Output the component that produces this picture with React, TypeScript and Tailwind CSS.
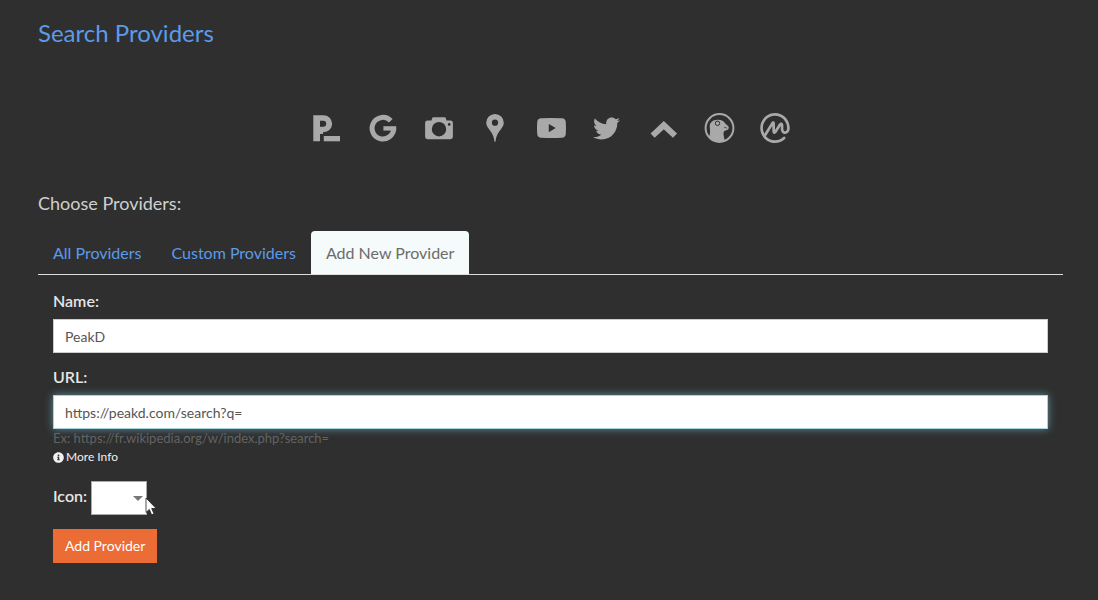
import { FaInfoCircle, FaTwitter } from "react-icons/fa";
import { SiCoinmarketcap } from "react-icons/si";

const ICON = "h-8 w-8";

function Presearch() {
  return (
    <svg viewBox="0 0 32 32" className={ICON} fill="currentColor">
      <path fillRule="evenodd" d="M2.3 3.3H12.5A8.6 8.4 0 0 1 12.5 20.2H12V22H9V29.3H2.3ZM9 8.8V14.8H12.2A3 3 0 0 0 12.2 8.8Z" />
      <path d="M12.8 24H29V29.3H12.8Z" />
    </svg>
  );
}

function Google() {
  return (
    <svg viewBox="0 0 32 32" className={ICON} fill="none" stroke="currentColor" strokeWidth="5">
      <path d="M23.8 8.8A10.8 10.8 0 1 0 26.7 16.4" />
      <path d="M16.4 16.4H29.2" strokeWidth="4.4" />
    </svg>
  );
}

function Camera() {
  return (
    <svg viewBox="0 0 32 32" className={ICON} fill="currentColor">
      <path
        fillRule="evenodd"
        d="M10.5 5.3H21.5Q22.6 5.3 22.9 6.3L23.5 8.6H27.5A2.4 2.4 0 0 1 29.9 11V24.8A2.4 2.4 0 0 1 27.5 27.2H4.5A2.4 2.4 0 0 1 2.1 24.8V11A2.4 2.4 0 0 1 4.5 8.6H8.5L9.1 6.3Q9.4 5.3 10.5 5.3ZM16 10A7.2 7.2 0 1 0 16 24.4A7.2 7.2 0 1 0 16 10ZM26.2 11A1.4 1.4 0 1 0 26.2 13.8A1.4 1.4 0 1 0 26.2 11Z"
      />
    </svg>
  );
}

function Pin() {
  return (
    <svg viewBox="0 0 32 32" className={ICON} fill="currentColor">
      <path fillRule="evenodd" d="M16 2A8.8 8.8 0 0 0 7.2 10.8C7.2 16.6 14.6 19.5 15.4 29.2Q16 30.2 16.6 29.2C17.4 19.5 24.8 16.6 24.8 10.8A8.8 8.8 0 0 0 16 2ZM16 7.6A3.1 3.1 0 1 1 16 13.8A3.1 3.1 0 1 1 16 7.6Z" />
    </svg>
  );
}

function Youtube() {
  return (
    <svg viewBox="0 0 32 32" className={ICON} fill="currentColor">
      <path fillRule="evenodd" d="M6.3 6.2Q16.5 5.7 26.7 6.2Q30.5 6.4 30.8 10Q31.2 16 30.8 22Q30.5 25.6 26.7 25.8Q16.5 26.3 6.3 25.8Q2.5 25.6 2.2 22Q1.8 16 2.2 10Q2.5 6.4 6.3 6.2ZM13.8 11.9V20.3L20.7 16.1Z" />
    </svg>
  );
}

function Chevron() {
  return (
    <svg viewBox="0 0 32 32" className={ICON} fill="none" stroke="currentColor" strokeWidth="6">
      <path d="M5.6 23.6L16.8 13.2L28 23.6" />
    </svg>
  );
}

function Duck() {
  return (
    <svg viewBox="0 0 32 32" className={ICON}>
      <circle cx="16.5" cy="16" r="13.9" fill="none" stroke="currentColor" strokeWidth="2" />
      <path
        fill="currentColor"
        d="M6 24.8C7.7 21.5 7 18 6.7 14.5C6.5 10.5 10 7.7 14.5 7.7C18 7.5 21 8.8 22 11.3L25.3 14.3Q26.5 15.8 25.1 17.4L21 19.3C19.8 21.5 21 24.7 21.7 28.7C16.5 31.3 10 30.2 6 24.8Z"
      />
      <circle cx="14.5" cy="11.3" r="2.2" fill="none" stroke="#2f2f2f" strokeWidth="1" />
      <path d="M21 15.2L24 16.1" stroke="#2f2f2f" strokeWidth="0.7" />
    </svg>
  );
}

const PROVIDERS = [
  { name: "Presearch", icon: <Presearch /> },
  { name: "Google", icon: <Google /> },
  { name: "Images", icon: <Camera /> },
  { name: "Maps", icon: <Pin /> },
  { name: "YouTube", icon: <Youtube /> },
  { name: "Twitter", icon: <FaTwitter size={27} /> },
  { name: "Steemit", icon: <Chevron /> },
  { name: "DuckDuckGo", icon: <Duck /> },
  { name: "CoinMarketCap", icon: <SiCoinmarketcap size={30} /> },
];

const LABEL = "text-base font-semibold leading-6 text-[#e6e6e6]";
const INPUT = "block h-[34px] w-full border bg-white px-[11px] text-sm text-[#555] outline-none";
const TAB = "px-[15px] py-2.5 leading-[23px]";

export default function App() {
  return (
    <main className="min-h-screen bg-[#2f2f2f] pt-[15px] pr-[35px] pb-9 pl-[38px] font-['Lato',sans-serif] text-[#d0d0d0]">
      <h1 className="text-2xl leading-9 text-[#5b9bea]">Search Providers</h1>

      <ul className="mt-[61px] flex justify-center gap-6 text-[#a9a9a9]">
        {PROVIDERS.map((p) => (
          <li key={p.name}>
            <a href="#" aria-label={p.name} className="flex h-8 w-8 items-center justify-center">
              {p.icon}
            </a>
          </li>
        ))}
      </ul>

      <h2 className="mt-[47px] text-lg leading-6">Choose Providers:</h2>

      <nav className="mt-4 flex border-b border-[#dcdcdc] text-base">
        <a href="#all" className={`${TAB} text-[#5b9bea]`}>All Providers</a>
        <a href="#custom" className={`${TAB} text-[#5b9bea]`}>Custom Providers</a>
        <a href="#add" aria-current="page" className={`${TAB} rounded-t bg-[#f5fafa] text-[#6c6c6c]`}>Add New Provider</a>
      </nav>

      <form className="px-[15px] pt-3.5" onSubmit={(e) => e.preventDefault()}>
        <label htmlFor="name" className={LABEL}>Name:</label>
        <input id="name" type="text" defaultValue="PeakD" className={`${INPUT} mt-1.5 border-[#ccc]`} />

        <div className="mt-3">
          <label htmlFor="url" className={LABEL}>URL:</label>
          <input
            id="url"
            type="text"
            defaultValue="https://peakd.com/search?q="
            className={`${INPUT} mt-1.5 border-[#a5d3e0] shadow-[0_0_8px_rgba(125,205,225,0.6)]`}
          />
          <p className="text-[13px] leading-[18px] text-[#636363]">Ex: https://fr.wikipedia.org/w/index.php?search=</p>
          <a href="#info" className="flex items-center gap-0.5 text-xs leading-5 text-[#f0f0f0]">
            <FaInfoCircle size={11} />
            More Info
          </a>
        </div>

        <div className="mt-3.5 flex items-center gap-1">
          <label htmlFor="icon" className={`${LABEL} pb-1`}>Icon:</label>
          <div className="relative">
            <select id="icon" className="block h-[34px] w-14 appearance-none border border-[#aaa] bg-white text-sm text-[#555] outline-none">
              <option value=""></option>
            </select>
            <svg viewBox="0 0 10 5" className="pointer-events-none absolute top-[15px] right-1 h-[5px] w-2.5">
              <path d="M0 0H10L5 5Z" fill="#777" />
            </svg>
            <svg viewBox="0 0 12 19" className="pointer-events-none absolute top-4 left-[54px] h-[19px] w-3">
              <path d="M1 1V15.5L4.3 12.4L6.6 17.8L9 16.8L6.7 11.5H11.2Z" fill="#fff" stroke="#222" strokeWidth="0.8" />
            </svg>
          </div>
        </div>

        <button type="submit" className="mt-3.5 block h-[34px] bg-[#eb6c34] px-3 text-sm text-white">
          Add Provider
        </button>
      </form>
    </main>
  );
}
